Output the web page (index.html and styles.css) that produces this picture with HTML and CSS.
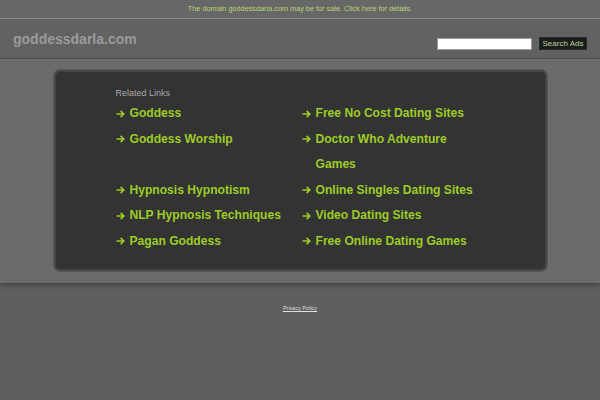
FILE: index.html
```html
<!DOCTYPE html>
<html>
<head>
<meta charset="utf-8">
<title>goddessdarla.com</title>
<link rel="stylesheet" href="styles.css">
</head>
<body>
<div class="topbar"><a href="#">The domain goddessdarla.com may be for sale. Click here for details.</a></div>
<div class="header">
  <div class="domain">goddessdarla.com</div>
  <form class="search">
    <input type="text" class="search-input">
    <button type="button" class="search-btn">Search Ads</button>
  </form>
</div>
<div class="content">
  <div class="panel">
    <div class="related">Related Links</div>
    <ul class="links">
      <li><svg class="arr" viewBox="0 0 9 8"><path d="M0.5 4H7.8M4.6 0.9L7.8 4L4.6 7.1"/></svg><a href="#">Goddess</a></li>
      <li><svg class="arr" viewBox="0 0 9 8"><path d="M0.5 4H7.8M4.6 0.9L7.8 4L4.6 7.1"/></svg><a href="#">Free No Cost Dating Sites</a></li>
      <li><svg class="arr" viewBox="0 0 9 8"><path d="M0.5 4H7.8M4.6 0.9L7.8 4L4.6 7.1"/></svg><a href="#">Goddess Worship</a></li>
      <li><svg class="arr" viewBox="0 0 9 8"><path d="M0.5 4H7.8M4.6 0.9L7.8 4L4.6 7.1"/></svg><a href="#">Doctor Who Adventure Games</a></li>
      <li><svg class="arr" viewBox="0 0 9 8"><path d="M0.5 4H7.8M4.6 0.9L7.8 4L4.6 7.1"/></svg><a href="#">Hypnosis Hypnotism</a></li>
      <li><svg class="arr" viewBox="0 0 9 8"><path d="M0.5 4H7.8M4.6 0.9L7.8 4L4.6 7.1"/></svg><a href="#">Online Singles Dating Sites</a></li>
      <li><svg class="arr" viewBox="0 0 9 8"><path d="M0.5 4H7.8M4.6 0.9L7.8 4L4.6 7.1"/></svg><a href="#">NLP Hypnosis Techniques</a></li>
      <li><svg class="arr" viewBox="0 0 9 8"><path d="M0.5 4H7.8M4.6 0.9L7.8 4L4.6 7.1"/></svg><a href="#">Video Dating Sites</a></li>
      <li><svg class="arr" viewBox="0 0 9 8"><path d="M0.5 4H7.8M4.6 0.9L7.8 4L4.6 7.1"/></svg><a href="#">Pagan Goddess</a></li>
      <li><svg class="arr" viewBox="0 0 9 8"><path d="M0.5 4H7.8M4.6 0.9L7.8 4L4.6 7.1"/></svg><a href="#">Free Online Dating Games</a></li>
    </ul>
  </div>
</div>
<div class="footer"><a href="#">Privacy Policy</a></div>
</body>
</html>
```
FILE: styles.css
```css
html, body {
  margin: 0;
  padding: 0;
}
body {
  background: #5f5f5f;
  font-family: "Liberation Sans", Arial, sans-serif;
}
.topbar {
  height: 18px;
  line-height: 18px;
  background: #676767;
  border-bottom: 1px solid #8a8a8a;
  text-align: center;
  font-size: 7.3px;
}
.topbar a {
  color: #b8d47a;
  text-decoration: none;
}
.header {
  height: 39px;
  background: #626262;
  border-bottom: 1px solid #545454;
  display: flex;
  align-items: center;
  justify-content: space-between;
  padding: 0 13px;
}
.domain {
  font-size: 14px;
  font-weight: bold;
  color: #9a9a9a;
}
.search {
  display: flex;
  align-items: center;
  gap: 7px;
  margin: 10px 0 0 0;
}
.search-input {
  box-sizing: border-box;
  width: 95px;
  height: 12px;
  margin: 0;
  padding: 0;
  border: 1px solid #9a9a9a;
  background: #fff;
}
.search-btn {
  box-sizing: border-box;
  height: 13px;
  width: 48px;
  margin: 0;
  padding: 0;
  border: 1px solid #2a2a2a;
  background: #1c1c1c;
  color: #b9d59a;
  font-family: "Liberation Sans", Arial, sans-serif;
  font-size: 8px;
  line-height: 11px;
}
.content {
  position: relative;
  background: #6b6b6b;
  border-top: 1px solid #6f6f6f;
  padding: 10px 0 12px;
  box-shadow: 0 2px 5px rgba(0, 0, 0, 0.35);
}
.panel {
  width: 493px;
  box-sizing: border-box;
  margin: 0 auto;
  background: #333333;
  border: 2px solid #464646;
  border-radius: 6px;
  box-shadow: 0 0 0 1px #5a5a5a;
  padding: 16px 0 15px 60px;
}
.related {
  font-size: 9px;
  line-height: 10px;
  color: #a9a9a9;
  margin-bottom: 3px;
}
.links {
  list-style: none;
  margin: 0;
  padding: 0;
  display: grid;
  grid-template-columns: 186px 186px;
}
.links li {
  display: flex;
  align-items: flex-start;
  font-size: 12.1px;
  font-weight: bold;
  line-height: 25.5px;
}
.links a {
  color: #9ccc25;
  text-decoration: none;
}
.arr {
  flex: none;
  width: 9px;
  height: 8px;
  margin: 8.5px 5px 0 0;
  fill: none;
  stroke: #9ccc25;
  stroke-width: 1.6;
}
.footer {
  padding-top: 22px;
  text-align: center;
  font-size: 5.5px;
  line-height: 7px;
}
.footer a {
  color: #dddddd;
  text-decoration: underline;
}
```
